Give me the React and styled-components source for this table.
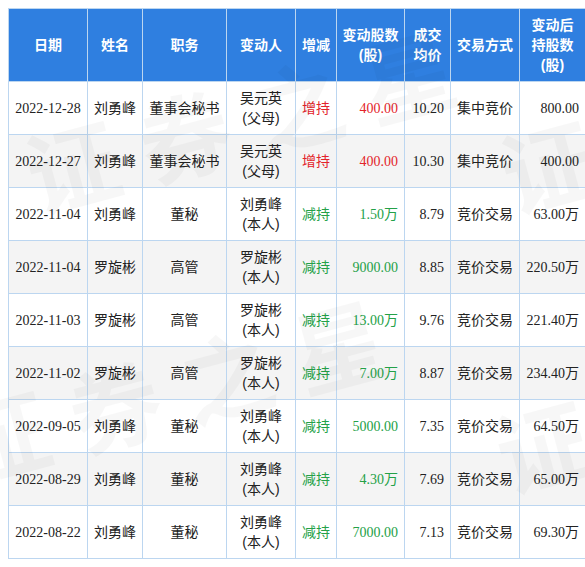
import * as React from 'react';
import styled, { createGlobalStyle } from 'styled-components';

const GlobalStyle = createGlobalStyle`
    html {
        overflow: hidden;
    }
    body {
        margin: 0;
        background: #ffffff;
        font-family: "Liberation Sans", "Noto Sans CJK SC", sans-serif;
    }
`;

const Wrapper = styled.div`
    position: relative;
    width: 577px;
    padding: 8px 0 0 8px;
    overflow: hidden;
`;

const Table = styled.table`
    border-collapse: collapse;
    table-layout: fixed;
    width: 577px;
    font-size: 14px;
    color: #222222;
`;

const HeadCell = styled.th`
    background: #2f7fe0;
    color: #ffffff;
    font-weight: bold;
    text-align: center;
    line-height: 20px;
    height: 72px;
    padding: 0 3px;
    border: 1px solid #bcd6f0;
`;

const Row = styled.tr`
    background: ${props => props.$alt ? '#f4f4f4' : '#ffffff'};
`;

const Cell = styled.td`
    height: 52px;
    padding: 0 6px;
    line-height: 20px;
    text-align: ${props => props.$align || 'center'};
    color: ${props => props.$tone === 'up' ? '#e3242b' : props.$tone === 'down' ? '#24a148' : '#222222'};
    border: 1px solid #bcd6f0;
    white-space: nowrap;
`;

const Num = styled.span`
    font-family: "Liberation Serif", "Noto Sans CJK SC", serif;
    font-size: 14px;
`;

const Watermark = styled.div`
    position: absolute;
    left: ${props => props.$x}px;
    top: ${props => props.$y}px;
    font-family: "Noto Sans CJK SC", sans-serif;
    font-size: 92px;
    font-weight: bold;
    letter-spacing: 24px;
    color: rgba(0, 0, 0, 0.03);
    transform: rotate(-15deg);
    transform-origin: left top;
    white-space: nowrap;
    pointer-events: none;
`;

const columns = [
    { title: '日期', width: 79 },
    { title: '姓名', width: 55 },
    { title: '职务', width: 84 },
    { title: '变动人', width: 69 },
    { title: '增减', width: 41 },
    { title: <>变动股数<br />(股)</>, width: 68 },
    { title: <>成交<br />均价</>, width: 46 },
    { title: '交易方式', width: 69 },
    { title: <>变动后<br />持股数<br />(股)</>, width: 66 },
];

// [日期, 姓名, 职务, 变动人, 关系, 增减, 变动股数, 均价, 方式, 持股数]
const rows = [
    ['2022-12-28', '刘勇峰', '董事会秘书', '吴元英', '(父母)', '增持', '400.00', '10.20', '集中竞价', '800.00'],
    ['2022-12-27', '刘勇峰', '董事会秘书', '吴元英', '(父母)', '增持', '400.00', '10.30', '集中竞价', '400.00'],
    ['2022-11-04', '刘勇峰', '董秘', '刘勇峰', '(本人)', '减持', '1.50万', '8.79', '竞价交易', '63.00万'],
    ['2022-11-04', '罗旋彬', '高管', '罗旋彬', '(本人)', '减持', '9000.00', '8.85', '竞价交易', '220.50万'],
    ['2022-11-03', '罗旋彬', '高管', '罗旋彬', '(本人)', '减持', '13.00万', '9.76', '竞价交易', '221.40万'],
    ['2022-11-02', '罗旋彬', '高管', '罗旋彬', '(本人)', '减持', '7.00万', '8.87', '竞价交易', '234.40万'],
    ['2022-09-05', '刘勇峰', '董秘', '刘勇峰', '(本人)', '减持', '5000.00', '7.35', '竞价交易', '64.50万'],
    ['2022-08-29', '刘勇峰', '董秘', '刘勇峰', '(本人)', '减持', '4.30万', '7.69', '竞价交易', '65.00万'],
    ['2022-08-22', '刘勇峰', '董秘', '刘勇峰', '(本人)', '减持', '7000.00', '7.13', '竞价交易', '69.30万'],
];

export default function App()
{
    return(
        <Wrapper>
            <GlobalStyle />
            <Table>
                <colgroup>
                    {columns.map((c, i) => <col key={i} style={{ width: c.width }} />)}
                </colgroup>
                <thead>
                    <tr>
                        {columns.map((c, i) => <HeadCell key={i}>{c.title}</HeadCell>)}
                    </tr>
                </thead>
                <tbody>
                    {rows.map((r, i) => {
                        var tone = r[5] === '增持' ? 'up' : 'down';
                        return(
                            <Row key={i} $alt={i % 2 === 1}>
                                <Cell><Num>{r[0]}</Num></Cell>
                                <Cell>{r[1]}</Cell>
                                <Cell>{r[2]}</Cell>
                                <Cell>{r[3]}<br />{r[4]}</Cell>
                                <Cell $tone={tone}>{r[5]}</Cell>
                                <Cell $tone={tone} $align="right"><Num>{r[6]}</Num></Cell>
                                <Cell $align="right"><Num>{r[7]}</Num></Cell>
                                <Cell $align="left">{r[8]}</Cell>
                                <Cell $align="right"><Num>{r[9]}</Num></Cell>
                            </Row>
                        );
                    })}
                </tbody>
            </Table>
            <Watermark $x={10} $y={110}>证券之星</Watermark>
            <Watermark $x={-60} $y={380}>证券之星</Watermark>
            <Watermark $x={485} $y={110}>证券</Watermark>
            <Watermark $x={480} $y={390}>证券</Watermark>
        </Wrapper>
    );
}
